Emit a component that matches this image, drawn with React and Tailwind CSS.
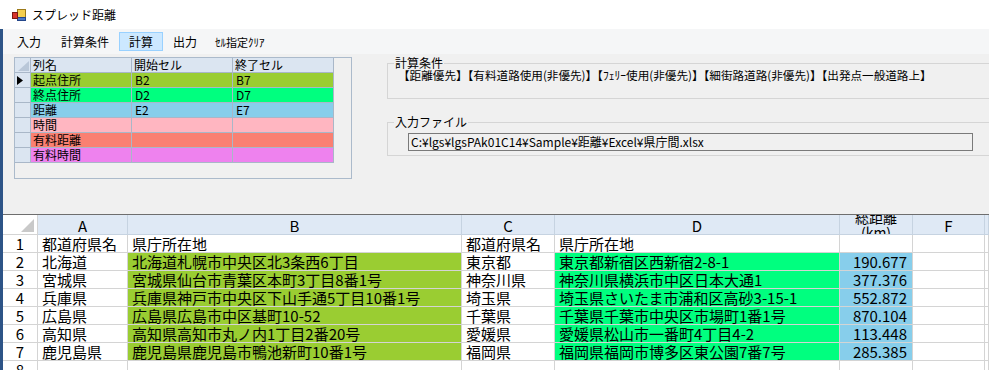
import React from "react";

const leftRows = [
  ["起点住所", "B2", "B7", "bg-[#9acd32]"],
  ["終点住所", "D2", "D7", "bg-[#00ff7f]"],
  ["距離", "E2", "E7", "bg-[#87ceeb]"],
  ["時間", "", "", "bg-[#ffb6c1]"],
  ["有料距離", "", "", "bg-[#fa8072]"],
  ["有料時間", "", "", "bg-[#ee82ee]"],
];

const sheet = [
  ["都道府県名", "県庁所在地", "都道府県名", "県庁所在地", ""],
  ["北海道", "北海道札幌市中央区北3条西6丁目", "東京都", "東京都新宿区西新宿2-8-1", "190.677"],
  ["宮城県", "宮城県仙台市青葉区本町3丁目8番1号", "神奈川県", "神奈川県横浜市中区日本大通1", "377.376"],
  ["兵庫県", "兵庫県神戸市中央区下山手通5丁目10番1号", "埼玉県", "埼玉県さいたま市浦和区高砂3-15-1", "552.872"],
  ["広島県", "広島県広島市中区基町10-52", "千葉県", "千葉県千葉市中央区市場町1番1号", "870.104"],
  ["高知県", "高知県高知市丸ノ内1丁目2番20号", "愛媛県", "愛媛県松山市一番町4丁目4-2", "113.448"],
  ["鹿児島県", "鹿児島県鹿児島市鴨池新町10番1号", "福岡県", "福岡県福岡市博多区東公園7番7号", "285.385"],
  ["", "", "", "", ""],
];

function AppIcon() {
  return (
    <svg width="14" height="12" viewBox="0 0 14 12">
      <rect x="5.5" y="0.5" width="8" height="8" fill="#f5cf4f" stroke="#9c7a1a" />
      <rect x="5.5" y="8.5" width="8" height="3" fill="#4a78c8" stroke="#24468a" />
      <rect x="0.5" y="3.5" width="5" height="6" fill="#d8362c" stroke="#7a1a14" />
    </svg>
  );
}

function Menu() {
  const items = ["入力", "計算条件", "計算", "出力"];
  return (
    <div className="h-[25px] bg-[#f5f6f7] flex items-center pl-[4px] shrink-0 text-[12px] leading-[14px]">
      {items.map((t) => (
        <div
          key={t}
          className={
            t === "計算"
              ? "h-[19px] px-[9px] flex items-center border border-[#99d1ff] bg-[#cce8ff]"
              : "h-[19px] px-[9px] flex items-center border border-transparent"
          }
        >
          {t}
        </div>
      ))}
      <div className="h-[19px] px-[7px] flex items-center border border-transparent text-[11px]">ｾﾙ指定ｸﾘｱ</div>
    </div>
  );
}

function LeftGrid() {
  const line = "border-r border-b border-[#a9b7c8]";
  return (
    <div className="ml-[11px] mt-[3px] w-[338px] h-[122px] border border-[#abbacb] bg-[#f0f0f0] shrink-0">
      <div className="grid grid-cols-[16px_101px_101px_101px] text-[12px] leading-[14px]">
        <div className={`h-[15px] bg-[#dbe5f1] ${line} flex items-end justify-end pr-[1px] pb-[1px]`}>
          <svg width="11" height="10" viewBox="0 0 11 10">
            <polygon points="11,0 11,10 0,10" fill="#b9c7d8" />
          </svg>
        </div>
        {["列名", "開始セル", "終了セル"].map((h) => (
          <div key={h} className={`h-[15px] bg-[#dbe5f1] ${line} pl-[2px] whitespace-nowrap`}>
            {h}
          </div>
        ))}
        {leftRows.map((r, i) => (
          <React.Fragment key={r[0]}>
            <div className={`h-[15px] bg-[#dbe5f1] ${line} flex items-center pl-[2px]`}>
              {i === 0 && (
                <svg width="6" height="9" viewBox="0 0 6 9">
                  <polygon points="0,0 6,4.5 0,9" fill="#000" />
                </svg>
              )}
            </div>
            <div className={`h-[15px] ${r[3]} ${line} pl-[2px] whitespace-nowrap`}>{r[0]}</div>
            <div className={`h-[15px] ${r[3]} ${line} pl-[3px]`}>{r[1]}</div>
            <div className={`h-[15px] ${r[3]} ${line} pl-[3px]`}>{r[2]}</div>
          </React.Fragment>
        ))}
      </div>
    </div>
  );
}

function RightGroups() {
  return (
    <div className="ml-[35px] w-[640px] shrink-0 flex flex-col text-[12px]">
      <fieldset className="mt-[3px] h-[42px] border border-[#d5d5d5] px-0">
        <legend className="ml-[6px] px-[1px] leading-[12px]">計算条件</legend>
        <div className="ml-[10px] leading-[12px] whitespace-nowrap text-[11.6px]">
          【距離優先】【有料道路使用(非優先)】【ﾌｪﾘｰ使用(非優先)】【細街路道路(非優先)】【出発点一般道路上】
        </div>
      </fieldset>
      <fieldset className="mt-[17px] h-[40px] border border-[#d5d5d5] px-0">
        <legend className="ml-[6px] px-[1px] leading-[12px]">入力ファイル</legend>
        <div className="ml-[20px] mt-[5px] w-[565px] h-[18px] border border-[#7a7a7a] bg-[#f0f0f0] pl-[2px] leading-[16px] whitespace-nowrap">
          C:¥lgs¥lgsPAk01C14¥Sample¥距離¥Excel¥県庁間.xlsx
        </div>
      </fieldset>
    </div>
  );
}

function Sheet() {
  const cols = "grid grid-cols-[35px_90px_334px_93px_285px_73px_72px_1fr]";
  const hdr = "h-[20px] bg-[#dfe9f5] border-r border-b border-[#c6d3e1] text-center leading-[17px] pt-[2px] overflow-hidden";
  const cell = "h-[18px] border-r border-b border-[#d4d4d4] leading-[16px] pt-[1px] whitespace-nowrap overflow-hidden";
  return (
    <div className="flex-1 overflow-hidden bg-white text-[15px]">
      <div className={cols}>
        <div className="h-[20px] bg-white border-r border-b border-[#d4d4d4] flex items-end justify-end pr-[3px] pb-[2px]">
          <svg width="13" height="13" viewBox="0 0 13 13">
            <polygon points="13,0 13,13 0,13" fill="#c9c9c9" />
          </svg>
        </div>
        <div className={hdr}>A</div>
        <div className={hdr}>B</div>
        <div className={hdr}>C</div>
        <div className={hdr}>D</div>
        <div className="h-[20px] bg-[#dfe9f5] border-r border-b border-[#c6d3e1] flex flex-col justify-center items-center overflow-hidden text-[14px] leading-[15px]">
          <div>総距離</div>
          <div>(km)</div>
        </div>
        <div className={hdr}>F</div>
        <div className={hdr}></div>
        {sheet.map((r, i) => {
          const colored = i >= 1 && i <= 6;
          return (
            <React.Fragment key={i}>
              <div className={`${cell} bg-white text-center`}>{i + 1}</div>
              <div className={`${cell} pl-[4px]`}>{r[0]}</div>
              <div className={`${cell} pl-[4px] ${colored ? "bg-[#9acd32]" : ""}`}>{r[1]}</div>
              <div className={`${cell} pl-[4px]`}>{r[2]}</div>
              <div className={`${cell} pl-[4px] ${colored ? "bg-[#00ff7f]" : ""}`}>{r[3]}</div>
              <div className={`${cell} pr-[5px] text-right ${colored ? "bg-[#87ceeb]" : ""}`}>{r[4]}</div>
              <div className={cell}></div>
              <div className={cell}></div>
            </React.Fragment>
          );
        })}
      </div>
    </div>
  );
}

export default function App() {
  return (
    <div className="w-[989px] h-[370px] overflow-hidden bg-[#f0f0f0] flex flex-col text-black font-['Noto_Sans_CJK_JP','Noto_Sans',sans-serif]">
      <div className="h-[29px] bg-white flex items-center shrink-0 pl-[12px]">
        <AppIcon />
        <span className="ml-[6px] text-[12px] leading-[14px]">スプレッド距離</span>
      </div>
      <div className="flex flex-1 min-h-0">
        <div className="w-[3px] bg-[#2d5487] shrink-0" />
        <div className="flex-1 min-w-0 flex flex-col">
          <Menu />
          <div className="h-[160px] shrink-0 flex">
            <LeftGrid />
            <RightGroups />
          </div>
          <div className="h-px bg-[#6e6e6e] shrink-0" />
          <Sheet />
        </div>
      </div>
    </div>
  );
}
